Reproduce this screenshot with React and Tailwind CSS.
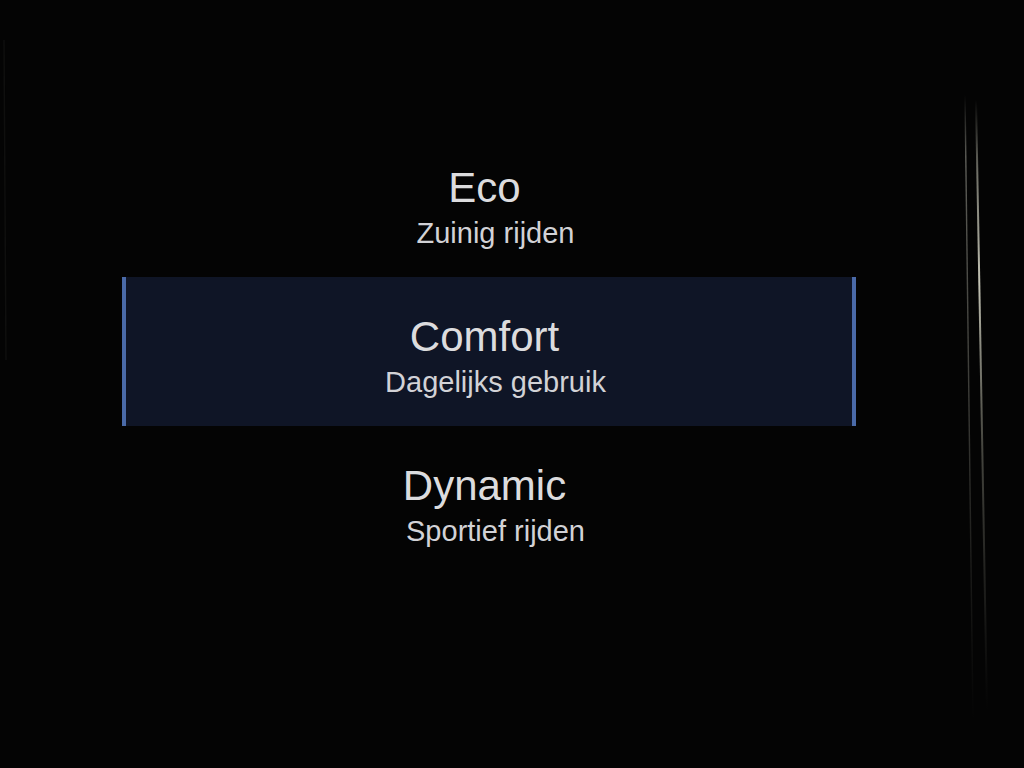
const modes = [
  { name: 'Eco', hint: 'Zuinig rijden' },
  { name: 'Comfort', hint: 'Dagelijks gebruik', active: true },
  { name: 'Dynamic', hint: 'Sportief rijden' }
];

function ModeRow({ name, hint, active }) {
  return (
    <div
      className={
        active
          ? 'flex h-[149px] flex-col items-center border-x-[4px] border-x-[#4a6aa8] bg-[#0f1526] pt-[39px]'
          : 'flex h-[149px] flex-col items-center border-x-[4px] border-x-transparent pt-[39px]'
      }
    >
      <span className="mr-[9px] text-[42px] leading-[42px] text-[#dcdcde]">{name}</span>
      <span className="ml-[13px] mt-[10px] text-[29px] leading-[29px] text-[#d2d2d6]">{hint}</span>
    </div>
  );
}

// Reflections along the bezel on the right
function EdgeGlare() {
  return (
    <svg className="pointer-events-none absolute inset-0" width="1024" height="768" viewBox="0 0 1024 768">
      <defs>
        <linearGradient id="glareA" x1="0" y1="95" x2="0" y2="720" gradientUnits="userSpaceOnUse">
          <stop offset="0" stopColor="#9a9a90" stopOpacity="0" />
          <stop offset="0.1" stopColor="#9a9a90" stopOpacity="0.6" />
          <stop offset="0.5" stopColor="#8a8a80" stopOpacity="0.4" />
          <stop offset="1" stopColor="#6a6a60" stopOpacity="0" />
        </linearGradient>
        <linearGradient id="glareB" x1="0" y1="100" x2="0" y2="710" gradientUnits="userSpaceOnUse">
          <stop offset="0" stopColor="#c8c8b8" stopOpacity="0" />
          <stop offset="0.12" stopColor="#c8c8b8" stopOpacity="0.55" />
          <stop offset="0.3" stopColor="#d8d8c8" stopOpacity="0.9" />
          <stop offset="0.55" stopColor="#a0a090" stopOpacity="0.45" />
          <stop offset="1" stopColor="#707068" stopOpacity="0" />
        </linearGradient>
      </defs>
      <line x1="965" y1="95" x2="973" y2="720" stroke="url(#glareA)" strokeWidth="1.4" />
      <line x1="976" y1="100" x2="987" y2="710" stroke="url(#glareB)" strokeWidth="2" />
      <line x1="4" y1="40" x2="6" y2="360" stroke="#1a1a18" strokeOpacity="0.5" strokeWidth="1.5" />
    </svg>
  );
}

export default function App() {
  return (
    <div
      className="relative h-[768px] w-[1024px] overflow-hidden bg-[#040404]"
      style={{ fontFamily: '"Liberation Sans", Arial, sans-serif' }}
    >
      <div className="ml-[122px] w-[734px] pt-[128px]">
        {modes.map((mode) => (
          <ModeRow key={mode.name} {...mode} />
        ))}
      </div>
      <EdgeGlare />
    </div>
  );
}
